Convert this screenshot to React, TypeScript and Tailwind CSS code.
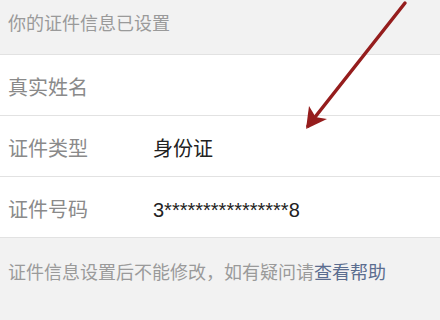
import React from 'react';

const rows = [
  { label: '真实姓名', value: '' },
  { label: '证件类型', value: '身份证' },
  { label: '证件号码', value: '3****************8' },
];

export default function App() {
  return (
    <div
      className="relative w-[440px] h-[320px] overflow-hidden bg-[#f2f2f2]"
      style={{ fontFamily: '"Liberation Sans", "Noto Sans CJK SC", sans-serif' }}
    >
      <div className="h-[55px] flex items-center pb-[5px] px-2 text-[18px] text-[#9a9a9a] border-b border-[#e2e2e2]">
        你的证件信息已设置
      </div>

      <div className="bg-white">
        {rows.map((row) => (
          <div
            key={row.label}
            className="h-[61px] flex items-center pt-[6px] px-2 border-b border-[#e2e2e2] text-[20px]"
          >
            <span className="w-[145px] text-[#8a8a8a]">{row.label}</span>
            <span className="text-[#222222]">{row.value}</span>
          </div>
        ))}
      </div>

      <div className="pt-[22px] px-2 text-[18px] text-[#9a9a9a]">
        证件信息设置后不能修改，如有疑问请<span className="text-[#5b6d8f]">查看帮助</span>
      </div>

      <svg
        className="absolute left-0 top-0"
        width="440"
        height="320"
        viewBox="0 0 440 320"
      >
        <g stroke="#951d1d" strokeWidth="3.5" strokeLinecap="round" fill="none">
          <line x1="405" y1="3" x2="308" y2="126" />
        </g>
        <path d="M306 129 L309 106 L315 116 Z" fill="#951d1d" />
        <path d="M306 129 L327 119 L315 117 Z" fill="#951d1d" />
      </svg>
    </div>
  );
}
